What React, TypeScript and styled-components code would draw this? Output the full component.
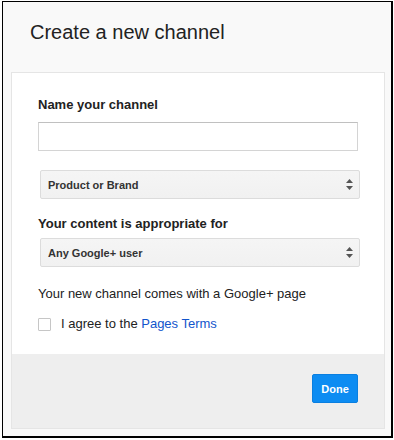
import styled, { createGlobalStyle } from "styled-components";

const GlobalStyle = createGlobalStyle`
  body {
    margin: 0;
    background: #ffffff;
    font-family: "Liberation Sans", Arial, sans-serif;
    color: #222;
  }
`;

const Arrows = () => (
  <svg width="7" height="11" viewBox="0 0 7 11">
    <polygon points="0,4 3.5,0 7,4" fill="#555" />
    <polygon points="0,7 3.5,11 7,7" fill="#555" />
  </svg>
);

export default function App() {
  return (
    <>
      <GlobalStyle />
      <Frame>
        <Title>Create a new channel</Title>
        <Card>
          <Body>
            <Label>Name your channel</Label>
            <TextInput type="text" />
            <SelectBox $gap={19}>
              <span>Product or Brand</span>
              <Arrows />
            </SelectBox>
            <Label $gap={17}>Your content is appropriate for</Label>
            <SelectBox $gap={6}>
              <span>Any Google+ user</span>
              <Arrows />
            </SelectBox>
            <Note>Your new channel comes with a Google+ page</Note>
            <CheckRow>
              <CheckBox type="checkbox" />
              <span>
                I agree to the <TermsLink href="#">Pages Terms</TermsLink>
              </span>
            </CheckRow>
          </Body>
          <Footer>
            <DoneButton>Done</DoneButton>
          </Footer>
        </Card>
      </Frame>
    </>
  );
}

const Frame = styled.div`
  box-sizing: border-box;
  width: 391px;
  height: 437px;
  margin: 1px 0 0 2px;
  border: 1px solid #000;
  border-right-width: 2px;
  border-bottom-width: 2px;
  background: #f9f9f9;
  padding: 18px 0 0 8px;
`;

const Title = styled.h1`
  margin: 0 0 0 19px;
  font-size: 20px;
  line-height: 24px;
  font-weight: normal;
  color: #222;
`;

const Card = styled.div`
  box-sizing: border-box;
  width: 374px;
  margin-top: 28px;
  border: 1px solid #e5e5e5;
  background: #fff;
`;

const Body = styled.div`
  display: flex;
  flex-direction: column;
  align-items: flex-start;
  padding: 24px 26px 22px 26px;
`;

const Label = styled.div<{ $gap?: number }>`
  margin-top: ${(p) => p.$gap ?? 0}px;
  font-size: 13px;
  line-height: 16px;
  font-weight: bold;
  color: #222;
`;

const TextInput = styled.input`
  box-sizing: border-box;
  width: 320px;
  height: 29px;
  margin: 9px 0 0;
  border: 1px solid #d4d4d4;
  border-top-color: #c0c0c0;
  background: #fff;
  outline: none;
`;

const SelectBox = styled.div<{ $gap: number }>`
  box-sizing: border-box;
  display: flex;
  align-items: center;
  justify-content: space-between;
  width: 320px;
  height: 29px;
  margin: ${(p) => p.$gap}px 0 0 2px;
  padding: 0 6px 0 7px;
  border: 1px solid #dcdcdc;
  border-radius: 2px;
  background: linear-gradient(#f5f5f5, #f1f1f1);
  font-size: 11px;
  font-weight: bold;
  color: #333;
`;

const Note = styled.p`
  margin: 19px 0 0;
  font-size: 13px;
  line-height: 16px;
  color: #222;
`;

const CheckRow = styled.label`
  display: flex;
  align-items: center;
  gap: 10px;
  margin-top: 14px;
  font-size: 13px;
  line-height: 16px;
  color: #222;
`;

const CheckBox = styled.input`
  appearance: none;
  box-sizing: border-box;
  width: 13px;
  height: 13px;
  margin: 0;
  border: 1px solid #c6c6c6;
  border-radius: 1px;
  background: #fff;
`;

const TermsLink = styled.a`
  color: #1155cc;
  text-decoration: none;
`;

const Footer = styled.div`
  display: flex;
  justify-content: flex-end;
  padding: 20px 26px 25px;
  background: #eeeeee;
`;

const DoneButton = styled.button`
  box-sizing: border-box;
  width: 46px;
  height: 29px;
  padding: 0;
  border: 1px solid #0a7fe0;
  border-radius: 2px;
  background: #0d8cf2;
  color: #fff;
  font-family: "Liberation Sans", Arial, sans-serif;
  font-size: 11px;
  font-weight: bold;
`;
